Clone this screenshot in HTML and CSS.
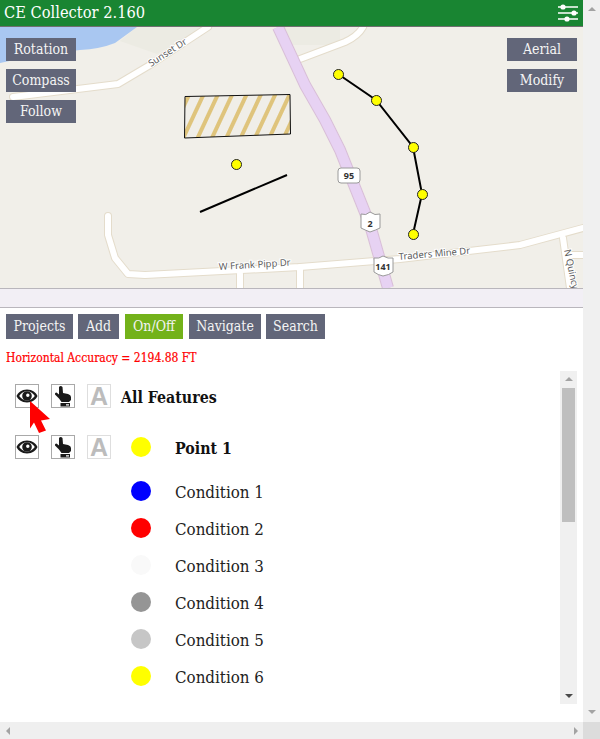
FILE: index.html
```html
<!DOCTYPE html>
<html lang="en">
<head>
<meta charset="utf-8">
<title>CE Collector</title>
<link rel="stylesheet" href="styles.css">
</head>
<body>
<div class="page">
  <main class="content">
    <header class="titlebar">
      <h1 class="app-title">CE Collector 2.160</h1>
      <svg class="settings" width="20" height="18" viewBox="0 0 20 18">
        <g stroke="#fff" stroke-width="2" fill="#fff">
          <path d="M0 3h20M0 9h20M0 15h20" fill="none" stroke-width="1.6"/>
          <circle cx="5" cy="3" r="1.6"/><circle cx="16" cy="9" r="1.6"/><circle cx="9" cy="15" r="1.6"/>
        </g>
      </svg>
    </header>
    <section class="map">
      <svg class="map-art" width="583" height="261" viewBox="0 27 583 261">
        <defs>
          <pattern id="hatch" width="13" height="40" patternUnits="userSpaceOnUse" patternTransform="translate(199.700 98) rotate(25)">
            <rect width="13" height="40" fill="#f0eee8"/>
            <rect x="0" width="4" height="40" fill="#dfc47c"/>
          </pattern>
        </defs>
        <rect x="0" y="27" width="583" height="261" fill="#f1efe9"/>
        <path d="M120 41L137 27H206L157 54Z" fill="#ecebe3"/>
        <path d="M284 27H340V45H292Z" fill="#ecebe3"/>
        <path d="M0 27H137Q126 35 115 43Q100 49 80 50Q40 54 0 63Z" fill="#a9c7f1"/>
        <g fill="none" stroke-linejoin="round" stroke-linecap="round">
          <g stroke="#e4dccb" stroke-width="8">
            <path d="M13 97L118 84L150 65L208 27"/>
            <path d="M300 59L345 42Q358 36 363 27"/>
            <path d="M108 216V235L115 258L128 274L145 275L300 267L400 259L520 245L583 228"/>
            <path d="M240 274V288M300 267V288"/>
            <path d="M563 238L570 288M568 255H583"/>
          </g>
          <g stroke="#fff" stroke-width="6">
            <path d="M13 97L118 84L150 65L208 27"/>
            <path d="M300 59L345 42Q358 36 363 27"/>
            <path d="M108 216V235L115 258L128 274L145 275L300 267L400 259L520 245L583 228"/>
            <path d="M240 274V288M300 267V288"/>
            <path d="M563 238L570 288M568 255H583"/>
          </g>
          <path d="M278 27L305 85L325 120L340 150L370 225L388 288" stroke="#d9bfd8" stroke-width="12" stroke-linecap="butt"/>
          <path d="M278 27L305 85L325 120L340 150L370 225L388 288" stroke="#e7d2f3" stroke-width="10" stroke-linecap="butt"/>
        </g>
        <g class="road-label">
          <text transform="translate(151 67) rotate(-33)">Sunset Dr</text>
          <text transform="translate(219 270) rotate(-3.500)">W Frank Pipp Dr</text>
          <text transform="translate(399 260) rotate(-5)">Traders Mine Dr</text>
          <text transform="translate(564 250) rotate(78)">N Quincy</text>
        </g>
        <g class="shield">
          <rect x="338" y="168" width="22" height="15" rx="3"/>
          <text x="349" y="179">95</text>
          <path d="M361 214Q366 216 370 212Q375 216 380 214V228Q376 230 370 232Q365 230 361 228Z"/>
          <text x="370" y="227">2</text>
          <path d="M374 258Q379 259 383 256Q388 259 393 258V272Q389 275 383 276Q378 275 374 272Z"/>
          <text x="383" y="270">141</text>
        </g>
        <polygon points="185,96.500 290,94.500 290.500,134 184.500,138" fill="url(#hatch)" stroke="#111" stroke-width="1"/>
        <path d="M338 74L376 100L413 147L422 194L413 234" fill="none" stroke="#000" stroke-width="2"/>
        <path d="M200 212L287 175" fill="none" stroke="#000" stroke-width="2"/>
        <g fill="#ff0" stroke="#222" stroke-width="1">
          <circle cx="338.500" cy="74.500" r="5"/><circle cx="376.500" cy="100.500" r="5"/><circle cx="413.500" cy="147.500" r="5"/><circle cx="422.500" cy="194.500" r="5"/><circle cx="413.500" cy="234.500" r="5"/><circle cx="236.500" cy="164.500" r="5"/>
        </g>
      </svg>
      <div class="map-controls map-controls-left">
        <button class="btn map-btn">Rotation</button>
        <button class="btn map-btn">Compass</button>
        <button class="btn map-btn">Follow</button>
      </div>
      <div class="map-controls map-controls-right">
        <button class="btn map-btn">Aerial</button>
        <button class="btn map-btn">Modify</button>
      </div>
    </section>
    <div class="splitter"></div>
    <nav class="toolbar">
      <button class="btn tool-btn w-projects">Projects</button>
      <button class="btn tool-btn w-add">Add</button>
      <button class="btn tool-btn w-onoff active">On/Off</button>
      <button class="btn tool-btn w-navigate">Navigate</button>
      <button class="btn tool-btn w-search">Search</button>
    </nav>
    <p class="accuracy">Horizontal Accuracy = 2194.88 FT</p>
    <section class="panel">
      <div class="feature-list">
        <div class="feature-row row-all">
          <span class="toggle"><svg width="22" height="14" viewBox="0 0 22 14"><use href="#eye"/></svg></span>
          <span class="toggle"><svg width="18" height="22" viewBox="0 0 18 22"><use href="#hand"/></svg></span>
          <span class="toggle toggle-off">A</span>
          <span class="feature-title title-all">All Features</span>
          <svg class="cursor" width="24" height="36" viewBox="0 0 24 36"><path d="M2 0L22 18L13 19.500L18 29.500L11 32L6 21.500L2 27.500Z" fill="#f00"/></svg>
        </div>
        <div class="feature-row row-point">
          <span class="toggle"><svg width="22" height="14" viewBox="0 0 22 14"><use href="#eye"/></svg></span>
          <span class="toggle"><svg width="18" height="22" viewBox="0 0 18 22"><use href="#hand"/></svg></span>
          <span class="toggle toggle-off">A</span>
          <span class="dot dot-yellow dot-point"></span>
          <span class="feature-title">Point 1</span>
        </div>
        <ul class="conditions">
          <li class="condition"><span class="dot dot-blue"></span><span class="condition-label">Condition 1</span></li>
          <li class="condition"><span class="dot dot-red"></span><span class="condition-label">Condition 2</span></li>
          <li class="condition"><span class="dot dot-white"></span><span class="condition-label">Condition 3</span></li>
          <li class="condition"><span class="dot dot-gray"></span><span class="condition-label">Condition 4</span></li>
          <li class="condition"><span class="dot dot-silver"></span><span class="condition-label">Condition 5</span></li>
          <li class="condition"><span class="dot dot-yellow"></span><span class="condition-label">Condition 6</span></li>
        </ul>
      </div>
      <div class="panel-scroll">
        <span class="arrow arrow-up arrow-mid"></span>
        <span class="panel-thumb"></span>
        <span class="arrow arrow-down arrow-dark"></span>
      </div>
    </section>
  </main>
  <aside class="page-scroll-v">
    <span class="arrow arrow-up arrow-mid"></span>
    <span class="arrow arrow-down arrow-mid"></span>
  </aside>
  <div class="page-scroll-h">
    <span class="arrow arrow-left"></span>
    <span class="arrow arrow-right"></span>
  </div>
  <div class="scroll-corner"></div>
</div>
<svg class="sprites" width="0" height="0">
  <symbol id="eye" viewBox="0 0 22 14">
    <path fill-rule="evenodd" fill="#1a1a1a" d="M11 0.500C5.500 0.500 2 3.500 0.500 7C2 10.500 5.500 13.500 11 13.500C16.500 13.500 20 10.500 21.500 7C20 3.500 16.500 0.500 11 0.500ZM11 2.300C14 2.300 17 4.300 18.800 7C17 9.700 14 11.700 11 11.700C8 11.700 5 9.700 3.200 7C5 4.300 8 2.300 11 2.300Z"/>
    <path fill-rule="evenodd" fill="#1a1a1a" d="M11 2.200A4.800 4.800 0 1 0 11 11.800A4.800 4.800 0 1 0 11 2.200ZM11.800 4.600A1.700 1.700 0 1 1 11.800 8A1.700 1.700 0 1 1 11.800 4.600Z"/>
  </symbol>
  <symbol id="hand" viewBox="0 0 18 22">
    <path fill="#1a1a1a" d="M5 2Q6.700 0 8.500 2L9 8L14 9Q17 10 17 12V15L15 17H7.500L5 13.500L1 9.500Q0.500 7.500 2.500 7.500L5 9.500Z"/>
    <path fill="#1a1a1a" fill-rule="evenodd" d="M6.500 18H16V21.500H6.500ZM12 19.300V20.500H15V19.300Z"/>
  </symbol>
</svg>
</body>
</html>
```
FILE: styles.css
```css
* { box-sizing: border-box; }
html, body { margin: 0; height: 100%; overflow: hidden; background: #fff; }
body { font-family: "DejaVu Serif Condensed", "DejaVu Serif", serif; color: #111; }

.page {
  display: grid;
  grid-template-columns: 583px 17px;
  grid-template-rows: 722px 17px;
  width: 600px;
  height: 739px;
}
.content { overflow: hidden; display: flex; flex-direction: column; }

.titlebar {
  height: 27px;
  flex: none;
  display: flex;
  align-items: center;
  justify-content: space-between;
  padding: 0 5px 1px 4px;
  background: #198532;
  border-bottom: 1px solid #6f6f6f;
}
.app-title { margin: 0; font-size: 16.300px; font-weight: 400; color: #fff; }
.settings { display: block; }

.map { position: relative; height: 261px; flex: none; }
.map-art { display: block; }
.road-label text { font: 9.500px "Noto Sans", sans-serif; fill: #5d5d5d; stroke: #fff; stroke-width: 2px; paint-order: stroke; }
.shield rect, .shield path { fill: #fff; stroke: #9a9a9a; stroke-width: 1; }
.shield text { font: 700 9px "Noto Sans", sans-serif; fill: #333; text-anchor: middle; }

.map-controls { position: absolute; top: 11px; display: flex; flex-direction: column; gap: 8px; }
.map-controls-left { left: 6px; }
.map-controls-right { right: 6px; }

.btn {
  border: 0;
  padding: 0 0 2px;
  margin: 0;
  color: #f4f4f4;
  background: #626679;
  font-family: inherit;
  font-size: 14px;
}
.map-btn { width: 70px; height: 23px; }

.splitter {
  height: 20px;
  flex: none;
  background: #f2eff5;
  border-top: 1px solid #b9b6bc;
  border-bottom: 1px solid #b9b6bc;
}

.toolbar { display: flex; gap: 5px; padding: 6px 0 0 6px; flex: none; }
.tool-btn { height: 25px; }
.active { background: #73b21a; }
.w-projects { width: 67px; }
.w-add { width: 41px; }
.w-onoff { width: 58px; margin-left: 1px; }
.w-navigate { width: 72px; margin-left: 1px; }
.w-search { width: 59px; }

.accuracy { margin: 11px 0 0 6px; height: 16px; font-size: 12px; line-height: 16px; color: #f00; flex: none; -webkit-text-stroke: 0.2px #f00; }

.panel { display: flex; margin: 5px 6px 0 0; height: 333px; flex: none; }
.feature-list { flex: 1; min-width: 0; overflow: hidden; }

.feature-row { display: flex; align-items: center; position: relative; padding-left: 15px; }
.row-all { height: 24px; margin-top: 13px; }
.row-point { height: 24px; margin-top: 27px; }

.toggle {
  width: 24px;
  height: 24px;
  flex: none;
  margin-right: 12px;
  display: flex;
  align-items: center;
  justify-content: center;
  border: 1px solid #a9a9a9;
  background: #fff;
}
.toggle-off {
  margin-right: 0;
  border-color: #dedede;
  color: #bcbcbc;
  font-family: "Liberation Sans", sans-serif;
  font-weight: 700;
  font-size: 25px;
  line-height: 1;
}
.feature-title { font-size: 15.800px; font-weight: 700; padding-top: 2px; }
.title-all { margin-left: 10px; }
.dot-point { margin: 0 24px 0 20px; }
.cursor { position: absolute; left: 28px; top: 17px; }

.dot { display: block; width: 20px; height: 20px; border-radius: 50%; flex: none; }
.dot-yellow { background: #ff0; }
.dot-blue { background: #00f; }
.dot-red { background: #f00; }
.dot-white { background: #f9f9f9; }
.dot-gray { background: #959595; }
.dot-silver { background: #c6c6c6; }

.conditions { list-style: none; margin: 13px 0 0; padding: 0 0 0 131px; }
.condition { display: flex; align-items: center; gap: 24px; height: 37px; font-size: 16.800px; color: #222; }
.condition-label { padding-top: 2px; }

.panel-scroll {
  width: 17px;
  flex: none;
  position: relative;
  background: #f0f0f0;
  display: flex;
  flex-direction: column;
  align-items: center;
  justify-content: space-between;
  padding: 6px 0 6px;
}
.panel-thumb { position: absolute; left: 2px; right: 2px; top: 17px; height: 134px; background: #bfbfbf; }

.arrow { display: block; width: 0; height: 0; border-style: solid; border-color: transparent; }
.arrow-up { border-width: 0 4px 4px; border-bottom-color: #a3a3a3; }
.arrow-down { border-width: 4px 4px 0; border-top-color: #a3a3a3; }
.arrow-mid.arrow-up { border-bottom-color: #a3a3a3; }
.arrow-dark { border-top-color: #4a4a4a; }
.arrow-left { border-width: 4px 4px 4px 0; border-right-color: #a3a3a3; }
.arrow-right { border-width: 4px 0 4px 4px; border-left-color: #a3a3a3; }

.page-scroll-v {
  background: #f0f0f0;
  display: flex;
  flex-direction: column;
  align-items: center;
  justify-content: space-between;
  padding: 7px 0 8px;
}
.page-scroll-h {
  background: #efefef;
  display: flex;
  align-items: center;
  justify-content: space-between;
  padding: 0 5px 0 6px;
}
.scroll-corner { background: #dcdcdc; }
.sprites { position: absolute; }
```
